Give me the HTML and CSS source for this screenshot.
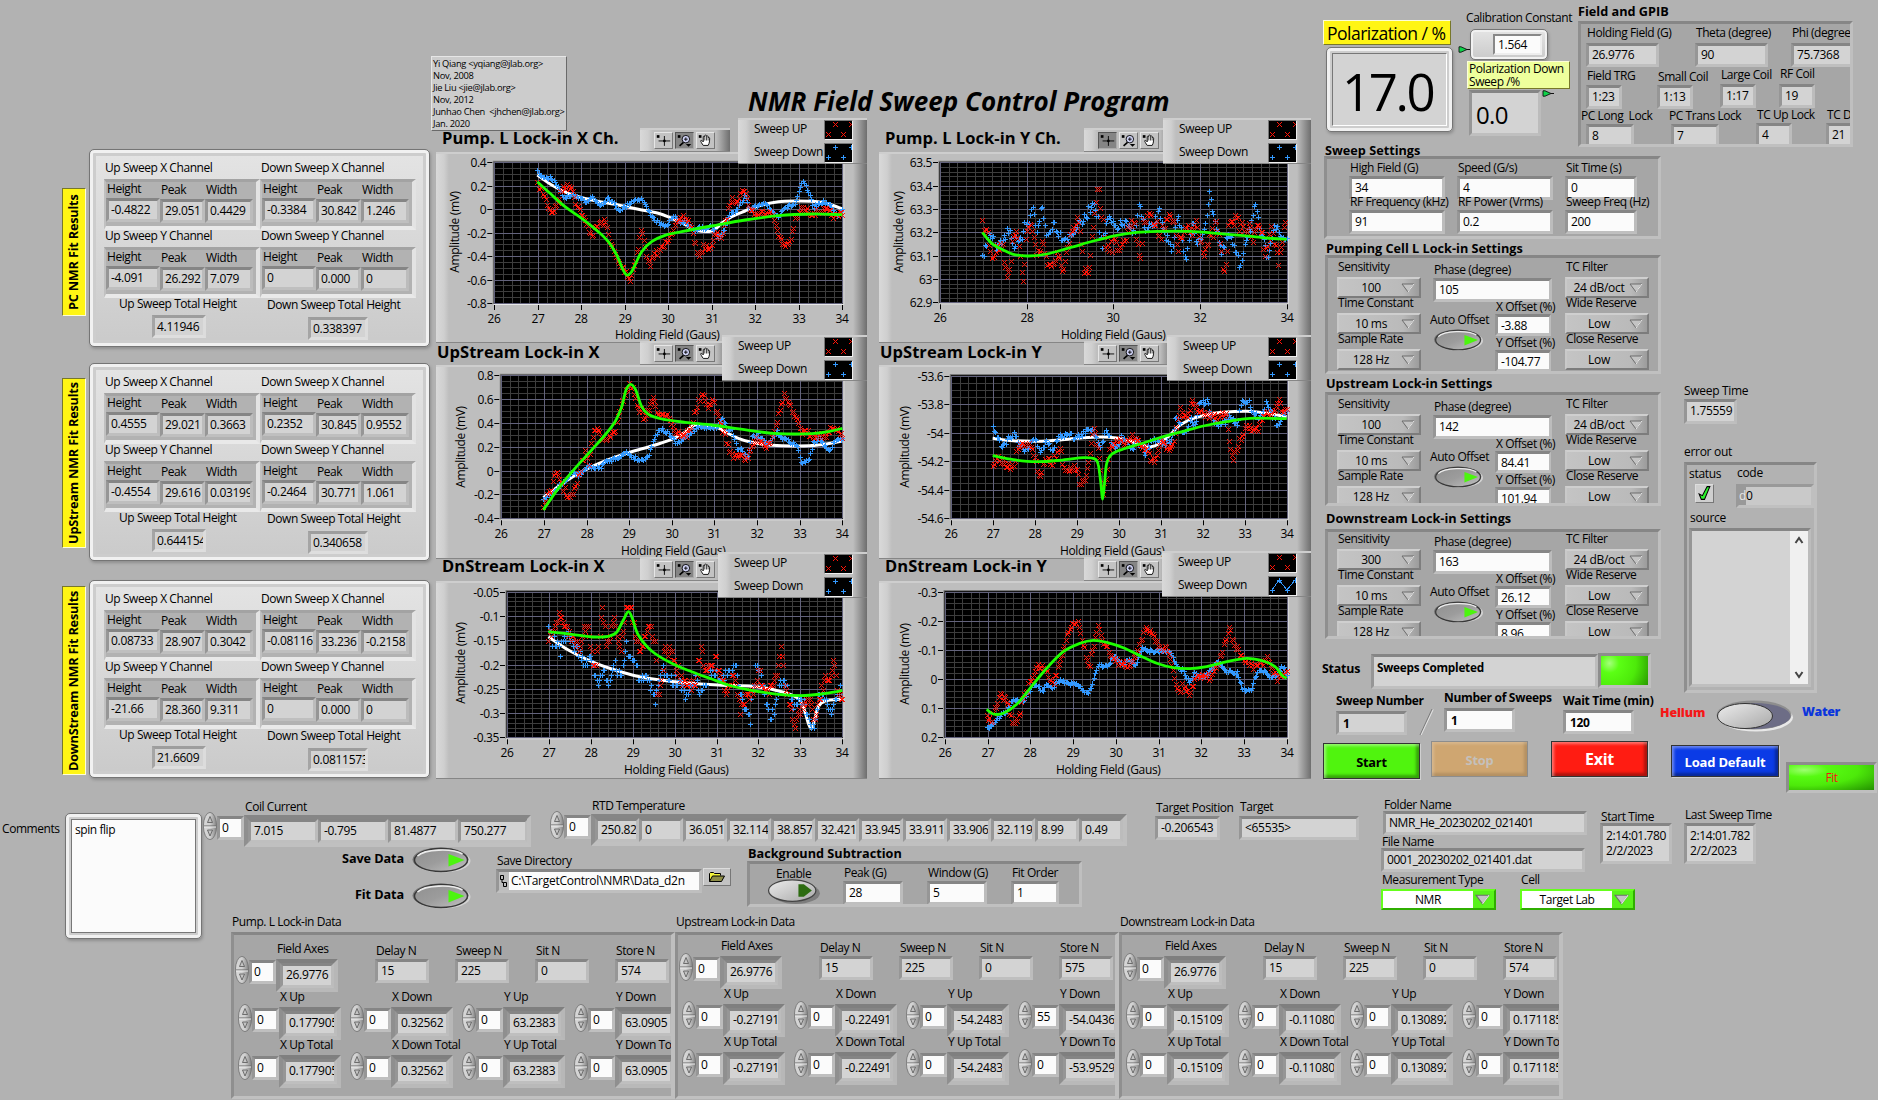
FILE: index.html
```html
<!DOCTYPE html>
<html lang="en">
<head>
<meta charset="utf-8">
<title>NMR Field Sweep Control Program</title>
<link rel="stylesheet" href="styles.css">
</head>
<body>
<svg class="defs" width="0" height="0" aria-hidden="true">
  <defs>
    <linearGradient id="gOn" x1="0" y1="0" x2="1" y2="1"><stop offset="0" stop-color="#8f8f8f"/><stop offset=".5" stop-color="#9c9c9c"/><stop offset="1" stop-color="#c2c2c2"/></linearGradient>
    <linearGradient id="gOff" x1="0" y1="0" x2="1" y2="1"><stop offset="0" stop-color="#ececec"/><stop offset="1" stop-color="#a8a8a8"/></linearGradient>
    <linearGradient id="gSpin" x1="0" y1="0" x2="1" y2="0"><stop offset="0" stop-color="#d8d8d8"/><stop offset=".5" stop-color="#d0d0d0"/><stop offset="1" stop-color="#838383"/></linearGradient>
    <symbol id="toggle" viewBox="0 0 58 26">
      <ellipse cx="30" cy="14" rx="28" ry="11.5" fill="#d2d2d2"/>
      <ellipse cx="28" cy="12.5" rx="28" ry="12" fill="#777"/>
      <ellipse cx="28.5" cy="13" rx="26.5" ry="11.5" fill="url(#gOn)" stroke="#383838" stroke-width="1.4"/>
      <path d="M5 9C12 2 40 1 50 7" fill="none" stroke="#ececec" stroke-width="1.6"/>
      <path d="M36 7l16 6-16 6.500z" fill="#4cf50e"/>
    </symbol>
    <symbol id="toggleOff" viewBox="0 0 58 28">
      <ellipse cx="31" cy="16" rx="27" ry="12" fill="#7d7d7d"/>
      <ellipse cx="27" cy="13" rx="26.500" ry="12" fill="url(#gOff)" stroke="#444" stroke-width="1.4"/>
      <path d="M34 6h6l9 7-9 7h-6z" fill="#2c6b10"/>
    </symbol>
    <symbol id="spin" viewBox="0 0 14 28">
      <ellipse cx="7" cy="14" rx="6.600" ry="13.600" fill="url(#gSpin)" stroke="#6f6f6f" stroke-width=".8"/>
      <path d="M1 14h12" stroke="#666"/><path d="M1 15h12" stroke="#eee"/>
      <path d="M4.500 10.500L7 4.500l2.500 6z" fill="#c4c4c4" stroke="#555" stroke-width=".8"/>
      <path d="M4.500 18L7 24l2.500-6z" fill="#c4c4c4" stroke="#555" stroke-width=".8"/>
    </symbol>
    <symbol id="tri" viewBox="0 0 14 10"><path d="M1 1h12L7 9z" fill="#c4c4c4" stroke="#6c6c6c"/><path d="M13 1L7 9" stroke="#eee"/></symbol>
    <symbol id="arrow" viewBox="0 0 12 7"><path d="M1 .8h2L9 3.500 3 6.200H1z" fill="#0ed24a" stroke="#111" stroke-width=".9"/><path d="M9 3.500h3" stroke="#111"/></symbol>
    <symbol id="icoCross" viewBox="0 0 19 16"><path d="M10.500 3v11M4 8.500h13" stroke="#000"/><circle cx="10.500" cy="8.500" r="1.500"/><path d="M2 2h3v3H2z" class="led"/></symbol>
    <symbol id="icoZoom" viewBox="0 0 19 16"><path d="M9 9.500L4 14" stroke="#000" stroke-width="1.800"/><circle cx="11" cy="6.500" r="4.200" fill="#cfd2f5" stroke="#000"/><path d="M9 6.500h4M11 4.500v4" stroke="#000"/><path d="M11 12h6l-3 3z"/><path d="M2 2h3v3H2z" class="led"/></symbol>
    <symbol id="icoHand" viewBox="0 0 19 16"><path d="M7 13.500C5.500 11.500 4 9 4.200 8.200 5 7.400 6 8.500 7 9.500V3.800c.3-.9 1.400-.9 1.700 0V2.600c.4-.9 1.600-.9 1.900 0v.8c.5-.8 1.600-.6 1.800.2v1.200c.6-.6 1.600-.3 1.700.6 0 3-.1 5.500-1.600 8.100z" fill="#fff" stroke="#000"/><path d="M8.700 4v4M10.600 3.500V8M12.400 4.500V8" stroke="#000" stroke-width=".8"/><path d="M2 2h3v3H2z" class="led"/></symbol>
  </defs>
</svg>

<main class="top">
  <div class="fits" id="fits"></div>

  <div class="centre">
    <div class="banner">
      <div class="note">Yi Qiang &lt;yqiang@jlab.org&gt;
Nov, 2008
Jie Liu &lt;jie@jlab.org&gt;
Nov, 2012
Junhao Chen  &lt;jhchen@jlab.org&gt;
Jan. 2020</div>
      <h1>NMR Field Sweep Control Program</h1>
    </div>
    <div class="plots" id="plots"></div>
  </div>

  <div class="controls">
    <div class="head">
      <div class="pol">
        <div class="tag big">Polarization / %</div>
        <div class="panel readout"><span>17.0</span></div>
      </div>
      <div class="calib">
        <label>Calibration Constant</label>
        <div class="panel cal"><div class="f in">1.564</div><svg class="arrow a1"><use href="#arrow"/></svg></div>
        <div class="tag pale">Polarization Down<br>Sweep /%</div>
        <div class="f down">0.0<svg class="arrow a2"><use href="#arrow"/></svg></div>
      </div>
      <div class="field">
        <h2>Field and GPIB</h2>
        <div class="cluster gpib">
          <div class="row g1">
            <div class="ctl"><label>Holding Field (G)</label><div class="f w73">26.9776</div></div>
            <div class="ctl"><label>Theta (degree)</label><div class="f w73">90</div></div>
            <div class="ctl"><label>Phi (degree)</label><div class="f w73">75.7368</div></div>
          </div>
          <div class="row g2">
            <div class="ctl"><label>Field TRG</label><div class="f w35">1:23</div></div>
            <div class="ctl"><label>Small Coil</label><div class="f w35">1:13</div></div>
            <div class="ctl"><label>Large Coil</label><div class="f w35">1:17</div></div>
            <div class="ctl"><label>RF Coil</label><div class="f w35">19</div></div>
          </div>
          <div class="row g3">
            <div class="ctl"><label>PC Long  Lock</label><div class="f w47">8</div></div>
            <div class="ctl"><label>PC Trans Lock</label><div class="f w47">7</div></div>
            <div class="ctl"><label>TC Up Lock</label><div class="f w35">4</div></div>
            <div class="ctl"><label>TC Down Lock</label><div class="f w35">21</div></div>
          </div>
        </div>
      </div>
    </div>

    <div class="body">
      <div class="settings">
        <h2>Sweep Settings</h2>
        <div class="cluster sweep">
          <div class="ctl"><label>High Field (G)</label><div class="f in w96">34</div></div>
          <div class="ctl"><label>Speed (G/s)</label><div class="f in w96">4</div></div>
          <div class="ctl"><label>Sit Time (s)</label><div class="f in w71">0</div></div>
          <div class="ctl"><label>RF Frequency (kHz)</label><div class="f in w96">91</div></div>
          <div class="ctl"><label>RF Power (Vrms)</label><div class="f in w96">0.2</div></div>
          <div class="ctl"><label>Sweep Freq (Hz)</label><div class="f in w71">200</div></div>
        </div>
        <div id="lockins"></div>
      </div>

      <div class="side">
        <div class="ctl st"><label>Sweep Time</label><div class="f">1.75559</div></div>
        <label class="eo">error out</label>
        <div class="cluster err">
          <div class="row">
            <div class="ctl stat"><label>status</label>
              <div class="ok"><svg viewBox="0 0 16 16"><path d="M3 8.500l3 1.500 4.500-8.500H13L8 13.500H5z" fill="#2bf52b" stroke="#000"/></svg></div></div>
            <div class="ctl code"><label>code</label><div class="f"><i>d</i>0</div></div>
          </div>
          <label class="src">source</label>
          <div class="f source"><div class="scroll"><svg viewBox="0 0 18 10"><path d="M5.500 8L9 3l3.500 5" fill="none" stroke="#444" stroke-width="2"/></svg><svg viewBox="0 0 18 10"><path d="M5.500 2L9 7l3.500-5" fill="none" stroke="#444" stroke-width="2"/></svg></div></div>
        </div>
      </div>
    </div>

    <div class="status">
      <b>Status</b><div class="f msg">Sweeps Completed</div><div class="led-box"></div>
    </div>
    <div class="counts">
      <div class="ctl n1"><label>Sweep Number</label><div class="f">1</div></div>
      <svg class="slash" viewBox="0 0 16 28"><path d="M14 1L2 27" stroke="#7c7c7c"/><path d="M15.200 1.500L3.200 27" stroke="#e4e4e4"/></svg>
      <div class="ctl n2"><label>Number of Sweeps</label><div class="f in">1</div></div>
      <div class="ctl n3"><label>Wait Time (min)</label><div class="f in">120</div></div>
      <b class="helium">Helium</b>
      <svg class="switch" viewBox="0 0 78 32"><ellipse cx="40" cy="17.500" rx="37" ry="14" fill="#e8e8e8"/><ellipse cx="38" cy="15" rx="37.500" ry="14.500" fill="#8e8e8e"/><ellipse cx="38.500" cy="16" rx="36" ry="13" fill="#6d6d86"/><ellipse cx="29" cy="16" rx="27.500" ry="12.500" fill="url(#gOff)" stroke="#333"/></svg>
      <b class="water">Water</b>
    </div>
    <div class="buttons">
      <button class="b start">Start</button>
      <button class="b stop">Stop</button>
      <button class="b exit">Exit</button>
      <button class="b load">Load Default</button>
      <div class="fitled">Fit</div>
    </div>
  </div>
</main>

<section class="bottom">
  <div class="comments"><label>Comments</label><div class="panel"><div class="area">spin flip</div></div></div>
  <div class="mid">
    <div class="arrays">
      <div class="arr coil"><svg class="spin"><use href="#spin"/></svg><div class="f in idx">0</div><div class="ctl"><label>Coil Current</label><div class="cluster cells" id="coil"></div></div></div>
      <div class="arr rtd"><svg class="spin"><use href="#spin"/></svg><div class="f in idx">0</div><div class="ctl"><label>RTD Temperature</label><div class="cluster cells" id="rtd"></div></div></div>
      <div class="ctl tp"><label>Target Position</label><div class="f">-0.206543</div></div>
      <div class="ctl tg"><label>Target</label><div class="f">&lt;65535&gt;</div></div>
    </div>
    <div class="save">
      <div class="toggles">
        <div><b>Save Data</b><svg class="tog"><use href="#toggle"/></svg></div>
        <div><b>Fit Data</b><svg class="tog"><use href="#toggle"/></svg></div>
      </div>
      <div class="ctl dir"><label>Save Directory</label>
        <div class="row"><div class="f in path"><svg viewBox="0 0 9 18"><path d="M1.500 3.500h3v4h-3zM4.500 10.500h3v4h-3zM3 7.500v3h1.500" fill="none" stroke="#000"/></svg><span>C:\TargetControl\NMR\Data_d2n</span></div>
        <div class="folder"><svg viewBox="0 0 18 12"><path d="M1.500 10.500v-8l1-1h3l1 1h6v2" fill="#f4f43a" stroke="#000"/><path d="M1.500 10.500l3-5.500h12l-3 5.500z" fill="#8d8d46" stroke="#000"/></svg></div></div>
      </div>
      <div class="bg">
        <h2>Background Subtraction</h2>
        <div class="cluster">
          <div class="ctl en"><label>Enable</label><svg><use href="#toggleOff"/></svg></div>
          <div class="ctl"><label>Peak (G)</label><div class="f in">28</div></div>
          <div class="ctl"><label>Window (G)</label><div class="f in">5</div></div>
          <div class="ctl fo"><label>Fit Order</label><div class="f in">1</div></div>
        </div>
      </div>
    </div>
  </div>
  <div class="names">
    <div class="ctl"><label>Folder Name</label><div class="f">NMR_He_20230202_021401</div></div>
    <div class="ctl file"><label>File Name</label><div class="f">0001_20230202_021401.dat</div></div>
    <div class="rings">
      <div class="ctl"><label>Measurement Type</label><div class="ring"><span>NMR</span><svg><use href="#tri"/></svg></div></div>
      <div class="ctl"><label>Cell</label><div class="ring"><span>Target Lab</span><svg><use href="#tri"/></svg></div></div>
    </div>
  </div>
  <div class="times">
    <div class="ctl"><label>Start Time</label><div class="f two">2:14:01.780<br>2/2/2023</div></div>
    <div class="ctl last"><label>Last Sweep Time</label><div class="f two">2:14:01.782<br>2/2/2023</div></div>
  </div>
</section>
<section class="data" id="data"></section>
<script src="app.js"></script>
</body>
</html>
```
FILE: styles.css
```css
* { box-sizing: border-box; }
body {
  margin: 0; width: 1878px; height: 1100px; overflow: hidden; background: #b2b2b2; color: #000;
  font: 12px/15px "Open Sans", "Noto Sans", sans-serif; letter-spacing: -.43px;
}
.defs { position: absolute; }
label { display: block; white-space: pre; height: 15px; }
h1, h2 { margin: 0; }
h2 { font-size: 12.7px; line-height: 18px; font-weight: 700; letter-spacing: 0; white-space: nowrap; }
.row { display: flex; }
.ctl { display: flex; flex-direction: column; flex: none; }

/* sunken numeric / string box */
.f {
  height: 24px; border: 3px solid; border-color: #858585 #bcbcbc #bfbfbf #969696; background: #d3d3d3;
  padding-left: 3px; line-height: 18px; letter-spacing: -.3px; white-space: pre; overflow: hidden; flex: none;
}
.f.in { background: #fbfbfb; }
.w35 { width: 36px; } .w47 { width: 48px; } .w71 { width: 72px; } .w73 { width: 73px; } .w96 { width: 96px; }
.cluster { border: 3px solid; border-color: #868686 #bfbfbf #c0c0c0 #8f8f8f; background: #a6a6a6; overflow: hidden; }
.panel {
  border: 1px solid #757575; border-radius: 5px; background: linear-gradient(#e4e4e4, #cacaca);
  box-shadow: inset 0 0 0 3px #f1f1f1, inset 0 0 0 6px #cdcdcd, 1px 2px 3px #8f8f8f;
}
.tag { background: #fff514; border: 1px solid; border-color: #fdfdd8 #77772a #77772a #fdfdd8; }

.top { display: grid; grid-template-columns: 431px 889px 558px; height: 785px; }

/* fit results */
.fits { padding: 149px 0 0 62px; }
.fit { display: flex; gap: 3px; height: 198px; margin-bottom: 16px; }
.fit:nth-child(2) { margin-bottom: 19px; }
.fit .tag { width: 24px; writing-mode: vertical-rl; transform: rotate(180deg); text-align: center; font-weight: 700; font-size: 12.7px; letter-spacing: -.2px; line-height: 21px; white-space: nowrap; }
.fit .tag { height: 128px; margin-top: 39px; }
.fit:nth-child(2) .tag { height: 170px; margin-top: 15px; }
.fit:nth-child(3) .tag { height: 189px; margin-top: 6px; }
.fit .panel { width: 341px; padding: 10px 0 0 14px; display: flex; }
.half { width: 156px; }
.half > label { padding-left: 1px; }
.half .cluster { width: 156px; height: 51px; border-width: 3px 4px 4px 2px; border-color: #a3a3a3 #e3e3e3 #e9e9e9 #c0c0c0; background: #b2b2b2; margin-top: 4px; display: grid; grid-template-columns: 54px 45px 48px; margin-bottom: -2px; }
.half .ctl { margin-top: 0; gap: 2px; margin-left: 0; }
.half .ctl:first-child { margin-top: -1px; }
.half .ctl label { padding-left: 1px; height: 15px; }
.half .ctl .f { width: 100%; padding-left: 2px; }
.half .total { margin: 4px 0 0 48px; padding-left: 2px; width: 54px; height: 23px; border-color: #9d9d9d #dcdcdc #dedede #a5a5a5; line-height: 17px; }
.half .tl { padding-left: 15px; }
.half + .half .tl { padding-left: 7px; }
.half + .half .cluster + label { margin-top: -1px; }
.half + .half .cluster ~ .tl { margin-top: -1px; padding-top: 1px; height: 16px; }
.half + .half .total { width: 60px; margin-top: 5px; }

/* banner */
.banner { height: 130px; padding-top: 56px; display: flex; }
.note { width: 136px; height: 75px; background: #cccccc; border: 1px solid; border-color: #e6e6e6 #6a6a6a #6a6a6a #e6e6e6; font-size: 9.3px; line-height: 12px; letter-spacing: -.3px; white-space: pre; padding: 1px 0 0 1px; }
h1 { margin: 28px 0 0 181px; font-size: 26px; line-height: 34px; font-style: italic; font-weight: 700; letter-spacing: .03px; white-space: nowrap; }

/* graphs */
.plots { display: grid; grid-template-columns: 431px 432px; column-gap: 12px; padding-left: 5px; }
.plot { position: relative; }
.plot h2 { height: 22px; font-size: 16.5px; line-height: 22px; margin-top: -3px; margin-bottom: 3px; letter-spacing: .05px; padding-left: 6px; }
.plot.r2 h2 { padding-left: 1px; margin-top: -2px; margin-bottom: 2px; }
.plot.r3 h2 { margin-top: -4px; margin-bottom: 4px; }
.plot > svg { display: block; }
.frame, .legend, .palette { background: linear-gradient(90deg, #d9d9d9, #cfcfcf 8px, #bebebe 13px, #bebebe calc(100% - 14px), #a2a2a2 calc(100% - 9px), #6e6e6e); border-top: 2px solid #cecece; border-bottom: 1px solid #868686; }
.palette { position: absolute; height: 24px; width: 90px; padding: 2px 0 0 14px; display: flex; gap: 2px; }
.palette span { width: 19px; height: 17px; background: #c3c3c3; border: 1px solid; border-color: #e6e6e6 #777 #777 #e6e6e6; }
.palette span.on { background: #858585; border-color: #555 #aaa #aaa #555; }
.palette svg { display: block; width: 17px; height: 15px; }
.palette .led { fill: #40603a; }
.palette .on .led { fill: #54ff10; }
.legend { position: absolute; right: 0; height: 46px; display: grid; grid-template-columns: auto 29px; grid-auto-rows: 23px; padding: 0 14px 0 16px; }
.legend label { line-height: 18px; height: 18px; letter-spacing: -.35px; }
.legend svg { width: 29px; height: 20px; background: #000; border: 1px solid; border-color: #777 #eee #eee #777; }
.axis { font-size: 12px; letter-spacing: -.35px; }

/* right-hand controls */
.head { height: 141px; display: flex; }
.pol { margin: 20px 0 0 3px; width: 130px; }
.big { width: 128px; height: 25px; font-size: 17.6px; line-height: 24px; padding-left: 3px; letter-spacing: -.55px; white-space: nowrap; }
.readout { width: 127px; height: 85px; margin: 2px 0 0 3px; padding: 5px; }
.readout span { display: block; height: 73px; border: 1px solid; border-color: #777 #fff #fff #777; background: #d3d3d3; font-size: 51px; line-height: 75px; letter-spacing: -2.4px; padding-left: 9px; }
.calib { margin-left: 13px; padding-top: 10px; width: 112px; }
.cal { position: relative; width: 78px; height: 31px; margin: 4px 0 0 4px; padding: 4px 5px 0 0; display: flex; justify-content: flex-end; box-shadow: inset 0 0 0 2px #f1f1f1, 1px 2px 3px #8f8f8f; }
.cal .f { width: 49px; height: 21px; border-width: 2px; border-color: #888 #eee #eee #888; line-height: 18px; }
.arrow { position: absolute; width: 12px; height: 7px; }
.a1 { left: -13px; top: 16px; }
.pale { background: #eeff9c; width: 103px; height: 28px; margin: 1px 0 0 1px; line-height: 13px; padding-left: 1px; letter-spacing: -.42px; white-space: nowrap; position: relative; }
.down { position: relative; overflow: visible; width: 72px; height: 46px; margin: 1px 0 0 3px; font-size: 24px; line-height: 44px; letter-spacing: -.7px; padding-left: 4px; }
.a2 { left: 70px; top: -3px; }
.field { padding-top: 2px; }
.field h2 { height: 16px; }
.gpib { width: 275px; height: 126px; margin-top: 3px; padding-left: 5px; }
.gpib .ctl label { padding-left: 1px; }
.g1 { padding-top: 1px; height: 44px; }
.g1 .ctl { gap: 3px; width: 109px; flex: none; } .g1 .ctl + .ctl { width: 96px; }
.g2 { height: 40px; } .g2 .ctl { width: 71px; gap: 2px; }
.g2 .ctl:nth-child(2) { width: 63px; margin-top: 1px; gap: 1px; } .g2 .ctl:nth-child(3) { width: 59px; margin-top: -1px; } .g2 .ctl:nth-child(4) { margin-top: -2px; gap: 3px; }
.g3 { margin-left: -6px; } .g3 .ctl { width: 88px; gap: 1px; } .g3 .ctl label { padding-left: 1px; }
.g3 .ctl .f { margin-left: 6px; } .g3 .ctl + .ctl .f { margin-left: 3px; }
.g3 .ctl:nth-child(n+3) { width: 70px; margin-top: -1px; } .g3 .ctl:nth-child(n+3) .f { margin-left: 0; }

.body { display: flex; height: 512px; }
.settings { width: 364px; padding-left: 4px; }
.settings h2 { padding-left: 1px; height: 15px; }
.sweep { width: 337px; height: 83px; display: grid; grid-template-columns: 108px 108px auto; grid-auto-rows: 34px; padding: 1px 0 0 22px; }
.sweep .ctl { gap: 1px; } .sweep label { padding-left: 1px; position: relative; }
.lock { display: flex; width: 336px; height: 119px; margin-left: 1px; padding: 1px 0 0 9px; }
#lockins h2 { height: 16px; padding-left: 2px; }
#lockins h2.t2 { height: 18px; }
#lockins h2.t3 { height: 20px; margin-top: 3px; }
.lock.l2 { height: 114px; } .lock.l3 { height: 110px; padding-top: 0; margin-top: 0; }
.lock.l3 > div { margin-top: -1px; }
.lock .ctl { height: 36px; gap: 3px; } .lock .ctl label { padding-left: 1px; }
.dd { height: 21px; width: 84px; flex: none; display: flex; align-items: center; letter-spacing: -.3px; border: 2px solid; border-color: #cfcfcf #7e7e7e #7c7c7c #c9c9c9; background: linear-gradient(90deg, #c4c4c4, #bababa 80%, #9c9c9c); }
.dd span { flex: 1; text-align: center; padding-left: 2px; white-space: nowrap; }
.dd svg { width: 14px; height: 10px; margin-right: 4px; }
.lock .c1 { width: 93px; } .lock .c2 { width: 135px; }
.lock .c2 .phase { margin: 3px 0 0 3px; height: 37px; gap: 1px; } .c2 .phase .f { width: 119px; }
.auto { width: 65px; padding-top: 13px; }
.auto svg { display: block; width: 51px; height: 22px; margin: 2px 0 0 3px; }
.lock .offs .ctl { gap: 0; } .offs .f { width: 56px; height: 22px; border-right-width: 2px; line-height: 17px; }

.side { padding-top: 242px; }
.side label { letter-spacing: -.3px; }
.st { gap: 1px; } .st .f { width: 53px; height: 25px; }
.eo { margin-top: 20px; }
.err { width: 133px; height: 231px; background: #b2b2b2; margin-top: 3px; padding: 1px 0 0 2px; }
.stat { width: 47px; gap: 3px; }
.ok { width: 19px; height: 19px; margin-left: 6px; border: 1px solid; border-color: #ddd #777 #777 #ddd; background: #cfcfcf; }
.ok svg { width: 17px; height: 17px; display: block; }
.code { gap: 4px; margin-top: -1px; } .code label { padding-left: 1px; }
.code .f { width: 78px; padding: 0; background: #c9c9c9; border-color: #999 #bfbfbf #c0c0c0 #999; }
.code i { display: inline-block; width: 7px; background: #999; color: #e8e8e8; font-style: normal; }
.src { margin: 2px 0 3px 1px; }
.source { width: 122px; height: 159px; padding: 0; display: flex; justify-content: flex-end; }
.scroll { width: 18px; background: #f0f0f0; display: flex; flex-direction: column; justify-content: space-between; padding: 4px 0; }
.scroll svg { width: 18px; height: 10px; }

.status { display: flex; height: 36px; padding-left: 2px; }
.status b { width: 49px; padding-top: 8px; font-size: 12.4px; letter-spacing: -.2px; }
.msg { width: 227px; height: 35px; margin-top: 1px; font-weight: 700; line-height: 20px; font-size: 11.8px; letter-spacing: -.25px; }
.led-box, .fitled { background: radial-gradient(circle at 18% 25%, #a5ff7c, #5bff14 22%, #4dea0a 60%, #2a9a00); border: 3px solid; border-color: #8d8d8d #bfbfbf #bfbfbf #8d8d8d; }
.led-box { width: 53px; height: 35px; }
.counts { display: flex; height: 51px; padding: 3px 0 0 16px; font-weight: 700; }
.counts label { letter-spacing: -.3px; height: 16px; }
.counts .f { width: 71px; }
.n1 { width: 82px; padding-top: 1px; gap: 2px; }
.slash { width: 16px; height: 28px; margin-top: 16px; }
.n2 { width: 119px; margin: -2px 0 0 10px; gap: 2px; }
.n3 { width: 97px; padding-top: 1px; gap: 1px; }
.counts .f { padding-left: 4px; line-height: 19px; }
.helium { color: #f51616; width: 56px; margin-top: 13px; font-size: 12.4px; letter-spacing: -.1px; }
.switch { width: 78px; height: 32px; margin-top: 8px; flex: none; }
.water { color: #0a35dc; margin: 12px 0 0 8px; font-size: 12.4px; letter-spacing: -.35px; }
.buttons { display: flex; padding-left: 3px; align-items: flex-start; height: 52px; }
.b { font: 700 12.8px "Open Sans", sans-serif; letter-spacing: -.2px; padding: 1px 0 0; width: 97px; height: 36px; border: 1px solid #333; box-shadow: inset 2px 2px 3px #fff6, inset -3px -3px 3px #0005, 1px 1px 0 #d0d0d0; margin-top: 1px; flex: none; }
.start { background: #50f40e; margin-top: 3px; }
.stop { background: #cfa671; color: #c4c0bc; border-color: #8d8d8d; margin-left: 11px; box-shadow: inset 2px 2px 3px #fff3, inset -3px -3px 3px #0002; }
.exit { background: #ff1c12; color: #fff; font-size: 16px; padding-top: 0; margin-left: 23px; }
.load { background: #0b3be6; color: #fff; width: 108px; height: 32px; margin: 5px 0 0 23px; font-size: 13px; }
.fitled { width: 91px; height: 31px; margin: 22px 0 0 7px; text-align: center; color: #f51616; line-height: 25px; background: radial-gradient(ellipse at 18% 20%, #9dff70, #57fa12 24%, #4dea0a 55%, #239000); flex: none; }

/* bottom strip */
.bottom { display: flex; height: 129px; }
.comments { display: flex; width: 203px; flex: none; }
.comments > label { width: 65px; padding: 36px 0 0 2px; flex: none; }
.comments .panel { width: 137px; height: 126px; margin-top: 28px; padding: 5px; }
.area { height: 114px; background: #fbfbfb; border: 1px solid #777; padding: 2px 0 0 3px; }
.mid { width: 1178px; flex: none; }
.arrays { display: flex; height: 62px; padding-top: 13px; }
.arr { display: flex; height: 49px; }
.arr .spin { width: 14px; height: 28px; margin-top: 14px; flex: none; }
.idx { width: 27px; height: 24px; padding-left: 2px; margin-top: 18px; }
.arr > .ctl label { padding-left: 1px; }
.coil { width: 347px; } .coil > .ctl { gap: 1px; padding-top: 1px; }
.rtd { width: 605px; } .rtd > .ctl { gap: 1px; }
.rtd .idx { margin-top: 17px; } .rtd .spin { margin-top: 13px; }
.cells { display: flex; border-width: 4px; background: #a0a0a0; }
.coil .cells { width: 287px; } .coil .cells .f { width: 70px; } .rtd .cells .f { width: 44px; }
.tp { margin-top: 2px; gap: 1px; width: 84px; } .tp .f { width: 65px; }
.tg { margin-top: 1px; gap: 2px; } .tg .f { width: 120px; }
.tp label, .tg label, .names label { padding-left: 1px; }
.save { display: flex; height: 67px; }
.toggles { width: 293px; padding-left: 130px; display: flex; flex-direction: column; gap: 11px; }
.toggles div { display: flex; justify-content: flex-end; gap: 8px; padding-right: 25px; height: 25px; }
.toggles b { font-size: 12.7px; padding-top: 4px; letter-spacing: -.1px; }
.tog { width: 59px; height: 26px; }
.dir { padding-top: 6px; width: 251px; }
.dir label { padding-left: 1px; }
.path { width: 206px; padding: 0; display: flex; margin-top: 1px; letter-spacing: -.27px; }
.f.path { background: #bdbdbd; }
.path svg { width: 9px; height: 18px; flex: none; }
.path span { flex: 1; background: #fbfbfb; padding-left: 2px; margin-left: 1px; }
.folder { width: 28px; height: 18px; border: 1px solid; border-color: #ddd #777 #777 #ddd; background: #c3c3c3; padding: 2px 4px; margin-left: 1px; }
.folder svg { width: 18px; height: 12px; display: block; }
.bg { padding-top: 0; margin-top: -3px; } .bg h2 { padding-left: 1px; height: 17px; }
.bg .cluster { display: flex; width: 335px; height: 46px; padding: 1px 0 0 17px; }
.bg .ctl { width: 84px; gap: 1px; } .bg .ctl label { padding-left: 1px; } .bg .f { width: 60px; }
.bg .ctl.en { width: 76px; margin-top: 1px; gap: 0; } .bg .en label { margin-left: 8px; } .en svg { width: 54px; height: 25px; margin-top: -2px; }
.bg .fo .f { width: 48px; }
.names { padding-top: 12px; width: 219px; flex: none; }
.names > .ctl { margin-left: 2px; height: 37px; } .names .f { width: 204px; margin-top: -1px; letter-spacing: -.45px; }
.names > .file { margin-left: 0; }
.rings { display: flex; gap: 24px; margin-top: 1px; }
.ring { width: 115px; height: 21px; margin-top: 2px; border: 2px solid; border-color: #66ff1c #2fae00 #2fae00 #66ff1c; background: #59f21a; display: flex; align-items: center; gap: 2px; }
.ring span { background: #fff; height: 17px; flex: 1; text-align: center; line-height: 17px; font-size: 12px; }
.ring svg { width: 15px; height: 11px; margin-right: 4px; }
.times { display: flex; padding-top: 24px; }
.times .ctl { width: 84px; } .times label { padding-left: 1px; }
.two { width: 72px; height: 41px; line-height: 15px; padding-top: 2px; letter-spacing: -.4px; margin-top: -1px; }
.last { margin-top: -2px; } .last .two { margin-top: 1px; }

/* lock-in data */
.data { display: flex; padding-left: 231px; height: 186px; }
.dc { width: 444px; }
.dc > label { padding-left: 1px; height: 18px; }
.dc .cluster { width: 444px; height: 167px; border-right-width: 4px; padding-top: 6px; }
.dc + .dc .cluster { padding-top: 3px; }
.dr { display: flex; height: 48px; padding-left: 4px; }
.dr:first-child { padding-left: 1px; }
.dr .arr { width: 112px; flex: none; } .dr:first-child .arr { width: 140px; }
.dr .arr .ctl { gap: 3px; } .dr .spin { margin-top: 15px; } .dr .idx { margin-top: 19px; }
.wrap { border: 4px solid; border-color: #7f7f7f #b7b7b7 #b9b9b9 #8f8f8f; width: 62px; height: 33px; }
.wrap .f { width: 54px; height: 25px; }
.dr > .ctl { width: 80px; margin-top: 2px; gap: 1px; } .dr > .ctl .f { width: 54px; } .dr > .ctl label { padding-left: 1px; }
```
FILE: app.js
```js
const $ = (id) => document.getElementById(id);
const ctl = (label, value, cls = '') => `<div class="ctl ${cls}"><label>${label}</label><div class="f">${value}</div></div>`;

/* ---- fit results ---- */
const fits = [
  ['PC NMR Fit Results',
    ['-0.4822', '29.051', '0.4429'], ['-4.091', '26.292', '7.079'], '4.11946',
    ['-0.3384', '30.842', '1.246'], ['0', '0.000', '0'], '0.338397'],
  ['UpStream NMR Fit Results',
    ['0.4555', '29.021', '0.3663'], ['-0.4554', '29.616', '0.03199'], '0.644154',
    ['0.2352', '30.845', '0.9552'], ['-0.2464', '30.771', '1.061'], '0.340658'],
  ['DownStream NMR Fit Results',
    ['0.08733', '28.907', '0.3042'], ['-21.66', '28.360', '9.311'], '21.6609',
    ['-0.08116', '33.236', '-0.2158'], ['0', '0.000', '0'], '0.0811573'],
];
const fitCluster = (v) => `<div class="cluster">${ctl('Height', v[0])}${ctl('Peak', v[1])}${ctl('Width', v[2])}</div>`;
const half = (dir, x, y, total) => `<div class="half"><label>${dir} Sweep X Channel</label>${fitCluster(x)}
  <label>${dir} Sweep Y Channel</label>${fitCluster(y)}
  <label class="tl">${dir} Sweep Total Height</label><div class="f total">${total}</div></div>`;
$('fits').innerHTML = fits.map(([name, ux, uy, ut, dx, dy, dt]) =>
  `<div class="fit"><div class="tag">${name}</div><div class="panel">${half('Up', ux, uy, ut)}${half('Down', dx, dy, dt)}</div></div>`).join('');

/* ---- lock-in settings ---- */
const dd = (label, value) => `<div class="ctl"><label>${label}</label><div class="dd"><span>${value}</span><svg><use href="#tri"/></svg></div></div>`;
const inp = (label, value, cls = '') => `<div class="ctl ${cls}"><label>${label}</label><div class="f in">${value}</div></div>`;
$('lockins').innerHTML = [
  ['Pumping Cell L Lock-in Settings', 100, 105, '-3.88', '-104.77'],
  ['Upstream Lock-in Settings', 100, 142, '84.41', '101.94'],
  ['Downstream Lock-in Settings', 300, 163, '26.12', '8.96'],
].map(([t, sens, phase, x, y], i) => `<h2 class="t${i + 1}">${t}</h2><div class="cluster lock l${i + 1}">
  <div class="c1">${dd('Sensitivity', sens)}${dd('Time Constant', '10 ms')}${dd('Sample Rate', '128 Hz')}</div>
  <div class="c2">${inp('Phase (degree)', phase, 'phase')}<div class="row"><div class="auto"><label>Auto Offset</label><svg><use href="#toggle"/></svg></div>
  <div class="offs">${inp('X Offset (%)', x)}${inp('Y Offset (%)', y)}</div></div></div>
  <div class="c3">${dd('TC Filter', '24 dB/oct')}${dd('Wide Reserve', 'Low')}${dd('Close Reserve', 'Low')}</div></div>`).join('');

/* ---- array indicators ---- */
const cells = (list) => list.map((v) => `<div class="f">${v}</div>`).join('');
$('coil').innerHTML = cells(['7.015', '-0.795', '81.4877', '750.277']);
$('rtd').innerHTML = cells(['250.82', '0', '36.051', '32.114', '38.857', '32.421', '33.945', '33.911', '33.906', '32.119', '8.99', '0.49']);

const arr = (label, value, idx = 0) => `<div class="arr"><svg class="spin"><use href="#spin"/></svg><div class="f in idx">${idx}</div>
  <div class="ctl"><label>${label}</label><div class="wrap"><div class="f">${value}</div></div></div></div>`;
$('data').innerHTML = [
  ['Pump. L Lock-in Data', 574, ['0.177905', '0.32562', '63.2383', '63.0905'], ['0.177905', '0.32562', '63.2383', '63.0905'], 0],
  ['Upstream Lock-in Data', 575, ['-0.27191', '-0.22491', '-54.2483', '-54.0436'], ['-0.27191', '-0.22491', '-54.2483', '-53.9529'], 55],
  ['Downstream Lock-in Data', 574, ['-0.15109', '-0.11080', '0.130892', '0.171185'], ['-0.15109', '-0.11080', '0.130892', '0.171185'], 0],
].map(([t, n, a, b, idx]) => `<div class="dc"><label>${t}</label><div class="cluster">
  <div class="dr">${arr('Field Axes', '26.9776')}${ctl('Delay N', 15)}${ctl('Sweep N', 225)}${ctl('Sit N', 0)}${ctl('Store N', n)}</div>
  <div class="dr">${arr('X Up', a[0])}${arr('X Down', a[1])}${arr('Y Up', a[2])}${arr('Y Down', a[3], idx)}</div>
  <div class="dr">${arr('X Up Total', b[0])}${arr('X Down Total', b[1])}${arr('Y Up Total', b[2])}${arr('Y Down Total', b[3])}</div>
</div></div>`).join('');

/* ---- graphs: traces are knots in thirds of a pixel, offset by ox / oy ---- */
const plots = [
  { row: 1, name: 'Pump. L Lock-in X Ch.', w: 431, h: 191, ox: -11, oy: -102, pal: 204, on: 1, leg: 129, legTop: -12,
    x: [58.3, 406.3], xt: [26, 27, 28, 29, 30, 31, 32, 33, 34], xm: 5, y: [10.3, 151], yt: ['0.4', '0.2', '0', '-0.2', '-0.4', '-0.6', '-0.8'], ym: 4,
    yl: [23, 80], xl: 179, jr: 9, jb: 5,
    g: '337,395 375,430 420,470 470,505 520,545 550,575 575,615 592,655 605,675 618,668 630,645 650,605 680,575 720,556 770,545 860,528 960,510 1060,497 1160,492 1252,494',
    w_: '337,375 380,405 430,430 500,450 570,463 640,478 700,490 740,505 780,523 810,540 860,543 890,520 920,500 960,483 1000,468 1060,455 1120,453 1180,455 1220,465 1252,477',
    b: '337,362 355,385 375,380 395,405 415,440 440,438 470,442 485,455 500,440 525,465 550,440 580,478 600,470 620,450 650,445 665,475 690,510 720,532 745,495 760,515 780,515 810,540 830,530 840,540 855,522 880,562 895,540 915,485 935,480 957,438 975,478 1000,465 1020,462 1060,500 1070,475 1110,460 1133,393 1145,415 1165,470 1190,455 1210,460 1235,495 1252,480',
    r: '337,405 350,420 370,470 380,488 395,465 415,408 440,408 450,450 470,495 500,555 520,520 540,515 560,590 580,640 600,660 615,690 625,650 640,590 648,535 655,570 665,620 675,645 690,610 715,590 735,550 755,520 775,500 795,520 805,560 818,620 835,590 860,590 870,550 890,560 905,500 915,450 935,450 957,412 970,465 990,495 1030,480 1045,500 1060,550 1075,590 1095,570 1110,510 1130,475 1160,488 1200,480 1230,500 1252,485' },
  { row: 1, name: 'Pump. L Lock-in Y Ch.', w: 432, h: 191, ox: -9, oy: -72, pal: 205, on: 0, leg: 148, legTop: -12,
    x: [61, 407.7], xt: [26, 28, 30, 32, 34], xm: 10, y: [10.3, 150.3], yt: ['63.5', '63.4', '63.3', '63.2', '63.1', '63', '62.9'], ym: 5,
    yl: [24, 80], xl: 182, jr: 22, jb: 15,
    g: '337,457 365,490 400,510 430,523 475,528 530,522 600,503 670,483 740,466 800,457 860,454 960,454 1040,460 1120,467 1190,474 1250,478',
    w_: '',
    b: '337,535 350,480 362,465 380,505 400,480 418,440 430,500 440,475 455,490 465,430 475,440 485,375 500,450 515,380 530,470 550,425 570,465 595,475 620,440 645,415 660,380 672,360 682,410 695,500 715,410 730,440 765,430 790,460 808,370 825,460 850,430 868,395 885,460 905,520 925,400 945,545 965,420 980,500 1000,450 1018,345 1035,420 1055,525 1075,460 1090,500 1110,560 1125,480 1140,440 1155,380 1170,450 1190,530 1212,430 1230,470 1250,475',
    r: '337,432 350,440 365,520 395,490 412,590 430,480 445,470 458,595 470,450 485,430 500,530 515,490 540,560 560,530 575,570 600,480 625,420 640,560 655,600 668,450 683,300 692,390 705,490 730,495 760,490 785,410 800,470 810,540 820,430 833,385 850,430 870,460 890,410 910,430 925,500 945,450 965,460 978,420 1000,510 1020,480 1040,430 1063,585 1080,400 1100,430 1130,440 1150,480 1165,420 1185,510 1205,450 1225,535 1245,440' },
  { row: 2, name: 'UpStream Lock-in X', w: 431, h: 194, ox: -11, oy: -30, pal: 204, on: 1, leg: 145, legTop: -8,
    x: [65.3, 406.3], xt: [26, 27, 28, 29, 30, 31, 32, 33, 34], xm: 5, y: [10.3, 153.3], yt: ['0.8', '0.6', '0.4', '0.2', '0', '-0.2', '-0.4'], ym: 4,
    yl: [29, 82], xl: 185, jr: 10, jb: 5,
    g: '355,525 400,460 450,400 500,345 540,300 570,260 590,215 603,165 617,148 632,165 650,215 670,238 710,252 780,262 860,270 930,280 1000,290 1060,296 1160,296 1210,290 1252,280',
    w_: '355,488 420,440 480,405 540,378 610,353 680,333 740,313 780,292 810,270 870,275 900,290 940,310 980,322 1040,331 1120,333 1180,330 1252,318',
    b: '355,490 380,475 405,450 430,425 445,410 460,420 485,395 500,395 520,400 540,380 580,365 605,350 620,365 650,375 670,360 690,300 705,280 730,295 755,325 790,300 820,270 850,278 875,275 890,245 905,280 920,285 935,340 950,340 965,370 980,305 1000,300 1025,330 1055,290 1075,310 1115,330 1130,385 1150,375 1165,320 1185,310 1210,350 1230,315 1252,310',
    r: '355,510 375,470 390,420 400,420 415,460 435,490 450,460 470,390 480,345 490,390 505,290 520,275 535,320 550,310 570,285 590,210 605,155 620,150 635,205 655,245 670,230 683,180 695,240 715,228 735,250 750,290 780,305 800,270 815,210 830,180 845,210 865,198 880,250 895,290 920,365 945,355 965,375 985,320 1000,310 1025,335 1045,290 1060,240 1075,178 1090,205 1110,250 1130,290 1170,300 1200,300 1230,275 1252,300' },
  { row: 2, name: 'UpStream Lock-in Y', w: 432, h: 194, ox: -9, oy: -30, pal: 205, on: 1, leg: 144, legTop: -8,
    x: [72.3, 407.7], xt: [26, 27, 28, 29, 30, 31, 32, 33, 34], xm: 5, y: [10.7, 153.3], yt: ['-53.6', '-53.8', '-54', '-54.2', '-54.4', '-54.6'], ym: 4,
    yl: [30, 82], xl: 181, jr: 10, jb: 9,
    g: '368,362 430,374 500,380 570,376 640,368 675,372 685,390 692,440 698,492 704,440 710,385 725,358 760,342 820,324 880,305 940,289 1000,273 1070,260 1140,250 1250,251',
    w_: '368,310 430,317 500,319 570,315 640,308 700,306 760,312 800,325 840,335 870,325 900,300 930,270 970,250 1010,240 1060,232 1130,229 1190,235 1250,245',
    b: '368,270 380,305 395,335 415,310 432,290 445,325 468,345 495,305 510,350 530,320 547,345 565,305 595,290 610,310 630,300 665,278 690,330 710,285 725,320 740,340 755,300 785,340 800,315 825,355 845,315 875,320 900,320 920,240 940,300 960,250 975,270 990,195 1010,200 1030,260 1050,270 1080,245 1100,270 1115,200 1135,195 1150,240 1170,245 1187,205 1220,270 1250,220',
    r: '368,395 385,365 410,395 430,390 445,330 475,320 490,360 508,420 525,370 545,380 570,335 583,415 600,400 618,400 630,450 645,440 655,380 665,310 672,280 685,360 698,480 708,420 720,340 740,310 760,330 785,305 810,325 830,350 850,380 875,305 895,350 912,320 930,220 945,250 965,200 985,230 1010,240 1040,250 1068,230 1078,330 1088,370 1110,310 1130,270 1160,285 1185,235 1205,245 1225,190 1240,240 1250,220' },
  { row: 3, name: 'DnStream Lock-in X', w: 431, h: 198, ox: -11, oy: -246, pal: 204, on: 1, leg: 149, legTop: -7,
    x: [71, 406.3], xt: [26, 27, 28, 29, 30, 31, 32, 33, 34], xm: 5, y: [10.7, 156.3], yt: ['-0.05', '-0.1', '-0.15', '-0.2', '-0.25', '-0.3', '-0.35'], ym: 5,
    yl: [29, 82], xl: 188, jr: 20, jb: 16, q: 14.57,
    g: '370,890 440,898 500,906 550,904 575,892 595,855 610,830 622,850 640,900 680,948 740,985 800,1010 860,1032 920,1053 980,1066 1060,1078 1130,1082 1190,1077 1252,1067',
    w_: '370,905 430,945 500,980 560,1002 630,1022 700,1034 780,1043 880,1050 980,1054 1040,1063 1100,1080 1125,1095 1140,1130 1150,1165 1160,1180 1170,1150 1180,1115 1200,1098 1252,1092',
    b: '370,860 380,910 405,945 425,900 450,935 480,985 500,965 515,1055 535,1000 550,1050 565,980 585,1030 603,935 620,970 640,1020 665,1030 690,1095 710,990 735,1030 760,1040 785,1090 810,1030 830,1075 850,1010 890,1030 930,1000 950,1100 975,1150 993,975 1010,1040 1033,1150 1050,1110 1065,1040 1090,1070 1110,1120 1130,1080 1162,1190 1180,1090 1200,1085 1220,1140 1245,1050',
    r: '370,925 385,885 400,845 415,870 430,900 460,935 485,865 500,960 510,1000 532,815 545,930 565,850 585,940 600,850 612,800 625,870 645,945 665,885 678,860 690,950 700,1105 715,960 735,935 755,1010 785,1050 810,1060 827,935 840,990 860,1000 875,970 900,1080 925,1020 945,1125 965,1060 980,1080 1000,1010 1020,1060 1045,1060 1068,945 1085,1100 1110,1160 1130,1130 1150,1100 1170,1150 1190,1055 1227,990 1240,1100 1252,1090' },
  { row: 3, name: 'DnStream Lock-in Y', w: 432, h: 198, ox: -9, oy: -246, pal: 205, on: 1, leg: 149, legTop: -8, line: true,
    x: [66, 407.7], xt: [26, 27, 28, 29, 30, 31, 32, 33, 34], xm: 5, y: [10.7, 156.3], yt: ['-0.3', '-0.2', '-0.1', '0', '0.1', '0.2'], ym: 5,
    yl: [30, 83], xl: 177, jr: 10, jb: 6,
    g: '350,1123 370,1137 400,1135 440,1108 480,1060 530,1000 580,950 630,925 670,916 710,922 760,938 810,962 860,985 910,998 960,1001 1010,995 1070,980 1130,970 1180,978 1215,995 1235,1020 1250,1030',
    w_: '',
    b: '350,1180 375,1160 405,1130 425,1095 460,1095 480,1060 500,1050 515,1065 530,1050 545,1060 565,1035 590,1045 620,1050 655,1075 670,1035 685,990 710,995 730,965 760,985 775,970 795,990 815,940 850,950 880,945 905,950 920,1000 940,1005 958,1045 975,1010 995,1030 1015,1015 1030,990 1045,980 1075,1010 1100,1010 1115,1055 1130,1068 1145,1060 1160,1010 1180,1010 1200,1025 1220,1020 1237,990 1250,1020',
    r: '350,1150 365,1155 390,1075 410,1100 428,1170 445,1150 460,1080 480,1040 505,990 525,1000 548,1050 565,990 590,900 612,855 628,870 640,930 655,1000 665,960 683,865 700,920 730,975 775,990 800,950 827,880 850,900 870,935 895,945 910,1010 922,1070 940,1050 958,1075 975,1030 995,1015 1020,1025 1045,980 1060,940 1077,875 1090,920 1110,960 1150,1000 1190,970 1220,1030 1250,1010' },
];

let seed = 7;
const rnd = () => { seed = (seed * 16807) % 2147483647; return seed / 2147483647 * 2 - 1; };
const parse = (s) => (s ? s.split(' ').map((p) => p.split(',').map(Number)) : []);

/* 225 samples along the knots with measurement scatter, returned in pixels */
function sample(p, s, jitter, n = 225) {
  const k = parse(s), out = [];
  const x0 = k[0][0], x1 = k[k.length - 1][0];
  let j = 0;
  for (let i = 0; i < n; i++) {
    const x = x0 + (x1 - x0) * i / (n - 1);
    while (j < k.length - 2 && k[j + 1][0] < x) j++;
    const t = (x - k[j][0]) / (k[j + 1][0] - k[j][0]);
    let y = k[j][1] + (k[j + 1][1] - k[j][1]) * t + rnd() * jitter;
    if (p.q) y = Math.round(y / p.q) * p.q;
    out.push([Math.round(x / 3 + p.ox), Math.round(y / 3 + p.oy)]);
  }
  return out;
}
function smooth(p, s) {
  const k = parse(s).map(([x, y]) => [x / 3 + p.ox, y / 3 + p.oy]);
  let d = `M${k[0]}`;
  for (let i = 0; i < k.length - 1; i++) {
    const a = k[Math.max(0, i - 1)], b = k[i], c = k[i + 1], e = k[Math.min(k.length - 1, i + 2)];
    const f = (v) => v.toFixed(1);
    d += `C${f(b[0] + (c[0] - a[0]) / 6)} ${f(b[1] + (c[1] - a[1]) / 6)} ${f(c[0] - (e[0] - b[0]) / 6)} ${f(c[1] - (e[1] - b[1]) / 6)} ${f(c[0])} ${f(c[1])}`;
  }
  return d;
}
const crosses = (pts) => pts.map(([x, y]) => `M${x - 2} ${y - 2}l5 5M${x + 3} ${y - 2}l-5 5`).join('');
const pluses = (pts) => pts.map(([x, y]) => `M${x - 2} ${y + .5}h5M${x + .5} ${y - 2}v5`).join('');

function draw(p) {
  const [xa, xb] = p.x, [ya, yb] = p.y, nx = p.xt.length - 1, ny = p.yt.length - 1;
  let minor = '', major = '', ticks = '', text = '';
  for (let i = 0; i <= nx * p.xm; i++) {
    const x = Math.round(xa + (xb - xa) * i / (nx * p.xm)) + .5;
    if (i % p.xm) minor += `M${x} ${ya}V${yb}`; else major += `M${x} ${ya}V${yb}`;
  }
  for (let i = 0; i <= ny * p.ym; i++) {
    const y = Math.round(ya + (yb - ya) * i / (ny * p.ym)) + .5;
    if (i % p.ym) minor += `M${xa} ${y}H${xb}`; else major += `M${xa} ${y}H${xb}`;
  }
  p.xt.forEach((v, i) => {
    const x = Math.round(xa + (xb - xa) * i / nx);
    ticks += `M${x + .5} ${yb + 2}v5`;
    text += `<text x="${x}" y="${(yb + 19.5).toFixed(1)}" text-anchor="middle">${v}</text>`;
  });
  p.yt.forEach((v, i) => {
    const y = Math.round(ya + (yb - ya) * i / ny);
    ticks += `M${xa - 7} ${y + .5}h5`;
    text += `<text x="${xa - 8}" y="${y + 4.5}" text-anchor="end">${v}</text>`;
  });
  const red = sample(p, p.r, p.jr), blue = sample(p, p.b, p.jb);
  const H = p.h - 3;
  return `<svg class="frame" width="${p.w}" height="${p.h}" viewBox="0 2 ${p.w} ${H}" preserveAspectRatio="none">
    <rect x="${xa - 1}" y="${ya - 1}" width="${xb - xa + 2}" height="${yb - ya + 2}" fill="#000" stroke="#777"/>
    <path d="M${xa - 1} ${yb + 1.5}H${xb + 1.5}V${ya}" fill="none" stroke="#e8e8e8"/>
    <path d="${minor}" stroke="#3d3d3d" shape-rendering="crispEdges"/><path d="${major}" stroke="#62627c" shape-rendering="crispEdges"/>
    <path d="${ticks}" stroke="#000"/>
    ${p.w_ ? `<path d="${smooth(p, p.w_)}" fill="none" stroke="#fff" stroke-width="3"/>` : ''}
    <g fill="none" shape-rendering="crispEdges">
      ${p.line ? `<path d="M${blue.map((q) => q.join(' ')).join('L')}" stroke="#3399ff"/>` : ''}
      <path d="${pluses(blue)}" stroke="#3399ff"/><path d="${crosses(red)}" stroke="#ff1408"/></g>
    <path d="${smooth(p, p.g)}" fill="none" stroke="#1cff00" stroke-width="2.8"/>
    <g class="axis">${text}
      <text x="${p.xl}" y="${p.row === 1 ? 187 : p.row === 2 ? 190 : 193}">Holding Field (Gaus)</text>
      <text transform="translate(${p.yl[0]} ${p.yl[1]}) rotate(-90)" text-anchor="middle">Amplitude (mV)</text></g>
  </svg>`;
}
const swatch = (kind, line) => {
  const pts = [[3, 13], [10, 3], [18, 13], [26, 3]];
  return kind === 'x'
    ? `<svg viewBox="0 0 27 18"><path d="${crosses(pts)}" stroke="#ff1408" fill="none" shape-rendering="crispEdges"/></svg>`
    : `<svg viewBox="0 0 27 18"><path d="${pluses(pts)}${line ? 'M3 13L10 3 18 13 26 3' : ''}" stroke="#3399ff" fill="none" shape-rendering="crispEdges"/></svg>`;
};
$('plots').innerHTML = plots.map((p) => `<div class="plot r${p.row}"><h2>${p.name}</h2>${draw(p)}
  <div class="palette" style="left:${p.pal}px;top:-2px">${['Cross', 'Zoom', 'Hand'].map((n, i) => `<span class="${p.on === i ? 'on' : ''}"><svg><use href="#ico${n}"/></svg></span>`).join('')}</div>
  <div class="legend" style="width:${p.leg}px;top:${p.legTop}px"><label>Sweep UP</label>${swatch('x')}<label>Sweep Down</label>${swatch('+', p.line)}</div></div>`).join('');
```
